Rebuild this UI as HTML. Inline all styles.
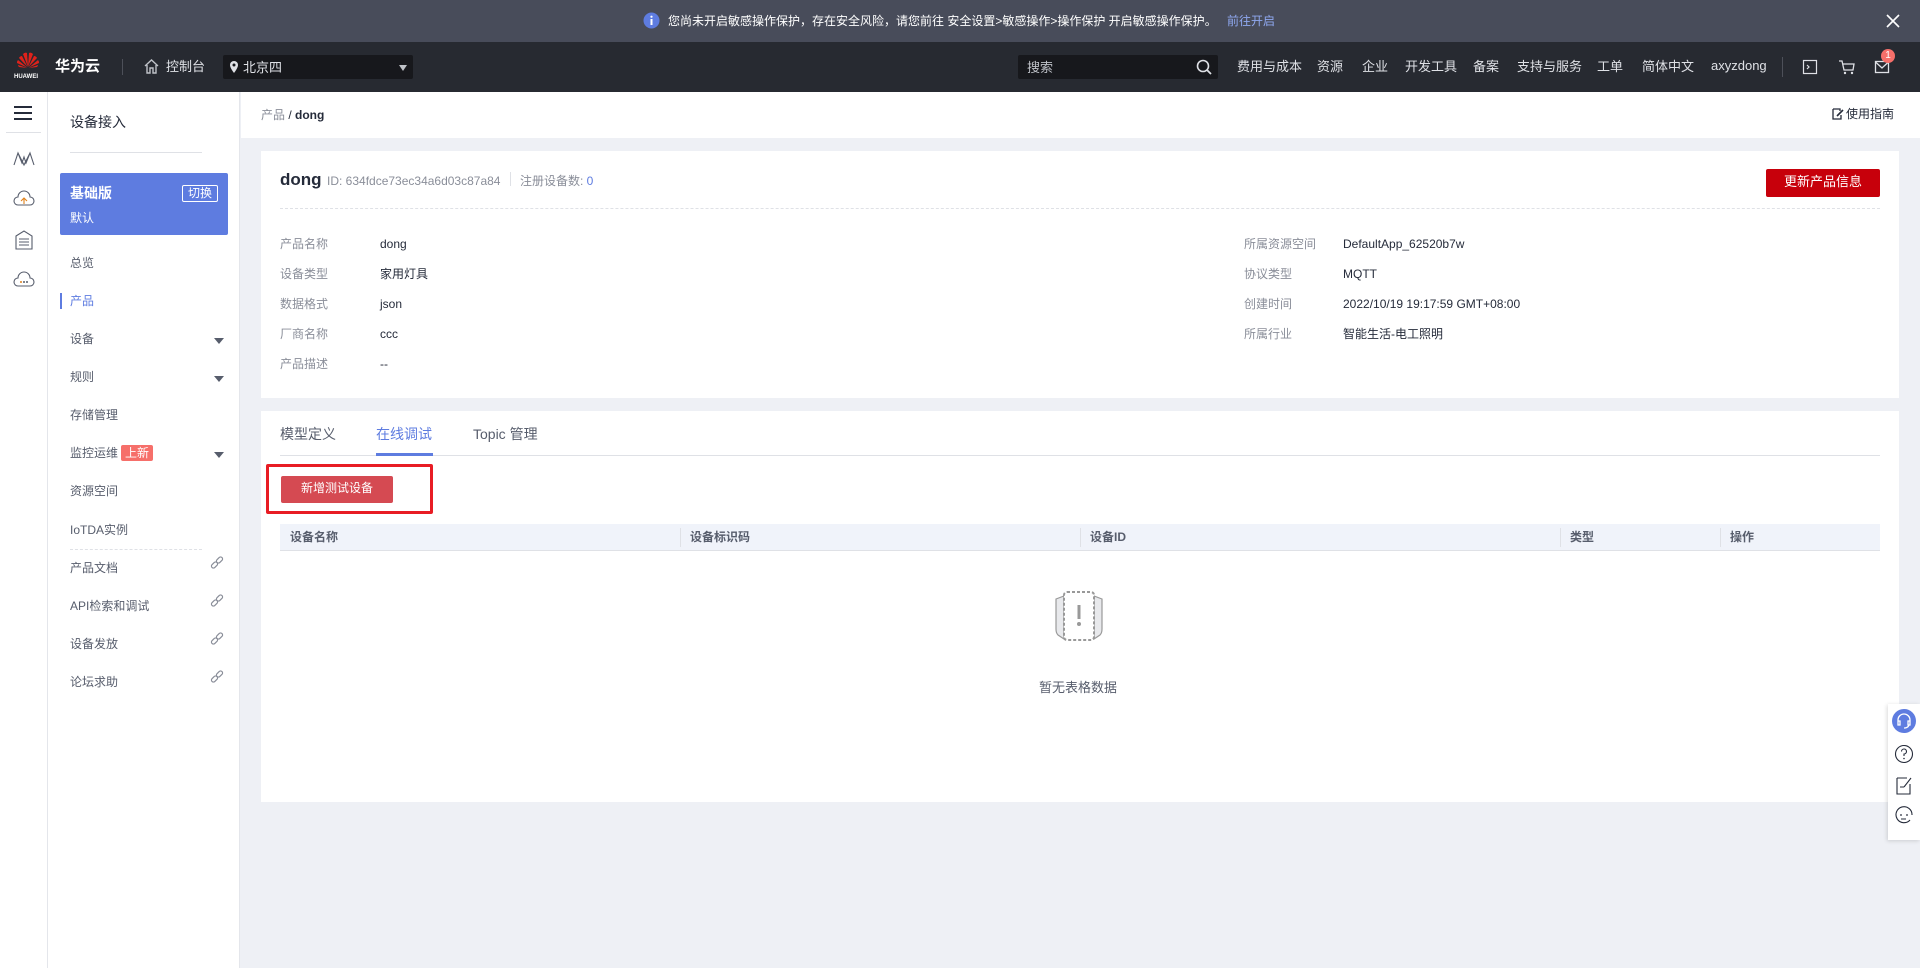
<!DOCTYPE html>
<html><head><meta charset="utf-8">
<style>
*{margin:0;padding:0;box-sizing:border-box}
body{width:1920px;height:968px;overflow:hidden;background:#eef0f5;font-family:"Liberation Sans","Noto Sans CJK SC",sans-serif;font-size:12px;color:#252b3a;position:relative}
.a{position:absolute;white-space:nowrap}
.banner{left:0;top:0;width:1920px;height:42px;background:#484c5a}
.nav{left:0;top:42px;width:1920px;height:50px;background:#272a31}
.navt{color:#dfe1e6;font-size:13px;top:56px}
.rail{left:0;top:92px;width:48px;height:876px;background:#fff;border-right:1px solid #e4e6eb}
.side{left:48px;top:92px;width:192px;height:876px;background:#fff;border-right:1px solid #e4e6eb}
.mi{left:70px;font-size:12px;color:#575d6c}
.arr{left:214px;width:0;height:0;border-left:5px solid transparent;border-right:5px solid transparent;border-top:6px solid #575d6c}
.lbl{color:#8a8e99}
.th{top:524px;height:27px;line-height:27px;font-weight:bold;color:#575d6c;padding-left:10px}
.dv{top:528px;width:1px;height:19px;background:#dfe1e6}
</style></head><body>
<div class="a banner"></div>
<svg class="a" style="left:643px;top:12px" width="17" height="17"><circle cx="8.5" cy="8.5" r="8" fill="#5e7ce0"/><rect x="7.5" y="7" width="2" height="6" fill="#fff"/><circle cx="8.5" cy="4.7" r="1.1" fill="#fff"/></svg>
<div class="a" style="left:668px;top:12px;color:#fff;font-size:12px">您尚未开启敏感操作保护，存在安全风险，请您前往 安全设置&gt;敏感操作&gt;操作保护 开启敏感操作保护。</div>
<div class="a" style="left:1227px;top:12px;color:#8fa8f0;font-size:12px">前往开启</div>
<svg class="a" style="left:1885px;top:13px" width="16" height="16"><path d="M2 2L14 14M14 2L2 14" stroke="#fff" stroke-width="1.6"/></svg>

<div class="a nav"></div>
<svg class="a" style="left:14px;top:51px" width="28" height="22" viewBox="0 0 28 22"><g fill="#e0221b"><path d="M14 16L9 3Q11 1 13 2Z"/><path d="M14 16L19 3Q17 1 15 2Z"/><path d="M13.5 16L5 7Q6 5 8 5Z"/><path d="M14.5 16L23 7Q22 5 20 5Z"/><path d="M13 16.5L3 12Q3 10 4 9Z"/><path d="M15 16.5L25 12Q25 10 24 9Z"/><path d="M13 17L5 16Q4 15 4 14Z"/><path d="M15 17L23 16Q24 15 24 14Z"/></g></svg>
<div class="a" style="left:14px;top:74px;color:#fff;font-size:6px;font-weight:bold">HUAWEI</div>
<div class="a" style="left:55px;top:55px;color:#fff;font-size:15px;font-weight:bold">华为云</div>
<div class="a" style="left:122px;top:59px;width:1px;height:16px;background:#4d5059"></div>
<svg class="a" style="left:143px;top:58px" width="17" height="17"><path d="M2 8L8.5 2L15 8M4 7V15H7V10H10V15H13V7" fill="none" stroke="#bfc2c8" stroke-width="1.4"/></svg>
<div class="a navt" style="left:166px">控制台</div>
<div class="a" style="left:223px;top:55px;width:190px;height:24px;background:#17181c;border-radius:2px"></div>
<svg class="a" style="left:229px;top:60px" width="10" height="14"><path d="M5 13C5 13 1 8 1 5A4 4 0 0 1 9 5C9 8 5 13 5 13Z" fill="#dfe1e6"/><circle cx="5" cy="5" r="1.5" fill="#17181c"/></svg>
<div class="a" style="left:243px;top:57px;color:#dfe1e6;font-size:13px">北京四</div>
<div class="a" style="left:399px;top:65px;border-left:4px solid transparent;border-right:4px solid transparent;border-top:6px solid #bfc2c8"></div>
<div class="a" style="left:1018px;top:55px;width:200px;height:24px;background:#17181c;border-radius:2px"></div>
<div class="a" style="left:1027px;top:57px;color:#bfc2c8;font-size:13px">搜索</div>
<svg class="a" style="left:1196px;top:59px" width="16" height="16"><circle cx="7" cy="7" r="5.5" fill="none" stroke="#dfe1e6" stroke-width="1.6"/><path d="M11 11L15 15" stroke="#dfe1e6" stroke-width="1.8"/></svg>
<div class="a navt" style="left:1237px">费用与成本</div>
<div class="a navt" style="left:1317px">资源</div>
<div class="a navt" style="left:1362px">企业</div>
<div class="a navt" style="left:1405px">开发工具</div>
<div class="a navt" style="left:1473px">备案</div>
<div class="a navt" style="left:1517px">支持与服务</div>
<div class="a navt" style="left:1597px">工单</div>
<div class="a navt" style="left:1642px">简体中文</div>
<div class="a navt" style="left:1711px;top:58px">axyzdong</div>
<div class="a" style="left:1782px;top:57px;width:1px;height:20px;background:#4d5059"></div>
<svg class="a" style="left:1802px;top:59px" width="16" height="16"><rect x="1.5" y="1.5" width="13" height="13" fill="none" stroke="#dfe1e6" stroke-width="1.2"/><path d="M5 6L7 8L5 10" fill="none" stroke="#dfe1e6" stroke-width="1.2"/></svg>
<svg class="a" style="left:1838px;top:59px" width="18" height="16"><path d="M1 2H4L6 11H15L16 5H5" fill="none" stroke="#dfe1e6" stroke-width="1.3"/><circle cx="7" cy="14" r="1.2" fill="#dfe1e6"/><circle cx="14" cy="14" r="1.2" fill="#dfe1e6"/></svg>
<svg class="a" style="left:1874px;top:59px" width="16" height="16"><rect x="1.5" y="2.5" width="13" height="11" fill="none" stroke="#dfe1e6" stroke-width="1.3"/><path d="M1.5 3L8 9L14.5 3" fill="none" stroke="#dfe1e6" stroke-width="1.3"/></svg>
<div class="a" style="left:1881px;top:49px;width:14px;height:14px;border-radius:7px;background:#f66f6a;color:#fff;font-size:10px;text-align:center;line-height:14px">1</div>

<div class="a rail"></div>
<div class="a" style="left:14px;top:106px;width:18px;height:2px;background:#252b3a;box-shadow:0 6px 0 #252b3a,0 12px 0 #252b3a"></div>
<div class="a" style="left:6px;top:132px;width:35px;height:1px;background:#dfe1e6"></div>
<svg class="a" style="left:13px;top:151px" width="22" height="16"><path d="M1 14L5 2L9 12L11 6L13 12L17 2L21 14M5 2L11 14L17 2" fill="none" stroke="#575d6c" stroke-width="1.1"/></svg>
<svg class="a" style="left:13px;top:190px" width="22" height="18"><path d="M5 15H17A4 4 0 0 0 17 7A6 6 0 0 0 5 7A4 4 0 0 0 5 15Z" fill="none" stroke="#575d6c" stroke-width="1.1"/><path d="M11 14V8M8 11L11 8L14 11" fill="none" stroke="#e0821b" stroke-width="1.1"/></svg>
<svg class="a" style="left:14px;top:230px" width="20" height="20"><path d="M2 6L10 1L18 6V19H2Z" fill="none" stroke="#575d6c" stroke-width="1.1"/><path d="M5 9H15M5 12H15M5 15H15" stroke="#575d6c"/></svg>
<svg class="a" style="left:13px;top:271px" width="22" height="16"><path d="M5 15H17A4 4 0 0 0 17 7A6 6 0 0 0 5 7A4 4 0 0 0 5 15Z" fill="none" stroke="#575d6c" stroke-width="1.1"/><circle cx="8" cy="11" r="1" fill="#e0821b"/><circle cx="11" cy="11" r="1" fill="#575d6c"/><circle cx="14" cy="11" r="1" fill="#575d6c"/></svg>

<div class="a side"></div>
<div class="a" style="left:70px;top:112px;font-size:14px;color:#252b3a">设备接入</div>
<div class="a" style="left:70px;top:152px;width:132px;height:1px;background:#dfe1e6"></div>
<div class="a" style="left:60px;top:173px;width:168px;height:62px;background:#5e7ce0;border-radius:2px"></div>
<div class="a" style="left:70px;top:183px;color:#fff;font-size:14px;font-weight:bold">基础版</div>
<div class="a" style="left:182px;top:185px;width:36px;height:17px;border:1px solid #fff;border-radius:2px;color:#fff;font-size:12px;text-align:center;line-height:15px">切换</div>
<div class="a" style="left:70px;top:209px;color:#fff;font-size:12px">默认</div>
<div class="a mi" style="top:254px">总览</div>
<div class="a" style="left:60px;top:293px;width:2px;height:16px;background:#5e7ce0"></div>
<div class="a mi" style="top:292px;color:#5e7ce0">产品</div>
<div class="a mi" style="top:330px">设备</div><div class="a arr" style="top:338px"></div>
<div class="a mi" style="top:368px">规则</div><div class="a arr" style="top:376px"></div>
<div class="a mi" style="top:406px">存储管理</div>
<div class="a mi" style="top:444px">监控运维</div>
<div class="a" style="left:121px;top:445px;width:32px;height:16px;background:#f66f6a;color:#fff;font-size:12px;text-align:center;line-height:16px;border-radius:2px">上新</div>
<div class="a arr" style="top:452px"></div>
<div class="a mi" style="top:482px">资源空间</div>
<div class="a mi" style="top:521px">IoTDA实例</div>
<div class="a" style="left:70px;top:549px;width:132px;border-top:1px dashed #dfe1e6"></div>
<div class="a mi" style="top:559px">产品文档</div>
<div class="a mi" style="top:597px">API检索和调试</div>
<div class="a mi" style="top:635px">设备发放</div>
<div class="a mi" style="top:673px">论坛求助</div>
<svg class="a" style="left:210px;top:556px" width="14" height="14"><g fill="none" stroke="#8a8e99" stroke-width="1.2"><rect x="1" y="7" width="7" height="4" rx="2" transform="rotate(-45 4.5 9)"/><rect x="6" y="2" width="7" height="4" rx="2" transform="rotate(-45 9.5 4)"/></g></svg>
<svg class="a" style="left:210px;top:594px" width="14" height="14"><g fill="none" stroke="#8a8e99" stroke-width="1.2"><rect x="1" y="7" width="7" height="4" rx="2" transform="rotate(-45 4.5 9)"/><rect x="6" y="2" width="7" height="4" rx="2" transform="rotate(-45 9.5 4)"/></g></svg>
<svg class="a" style="left:210px;top:632px" width="14" height="14"><g fill="none" stroke="#8a8e99" stroke-width="1.2"><rect x="1" y="7" width="7" height="4" rx="2" transform="rotate(-45 4.5 9)"/><rect x="6" y="2" width="7" height="4" rx="2" transform="rotate(-45 9.5 4)"/></g></svg>
<svg class="a" style="left:210px;top:670px" width="14" height="14"><g fill="none" stroke="#8a8e99" stroke-width="1.2"><rect x="1" y="7" width="7" height="4" rx="2" transform="rotate(-45 4.5 9)"/><rect x="6" y="2" width="7" height="4" rx="2" transform="rotate(-45 9.5 4)"/></g></svg>

<div class="a" style="left:241px;top:92px;width:1679px;height:46px;background:#fff"></div>
<div class="a" style="left:261px;top:106px;font-size:12px;color:#8a8e99">产品 <span style="color:#252b3a">/ <b>dong</b></span></div>
<svg class="a" style="left:1831px;top:107px" width="13" height="13"><path d="M2 2H9V4M2 2V12H10V8" fill="none" stroke="#252b3a" stroke-width="1.3"/><path d="M6 9L12 3" stroke="#252b3a" stroke-width="1.6"/></svg>
<div class="a" style="left:1846px;top:105px;font-size:12px;color:#252b3a">使用指南</div>

<div class="a" style="left:261px;top:151px;width:1638px;height:247px;background:#fff"></div>
<div class="a" style="left:280px;top:170px;font-size:17px;font-weight:bold;color:#252b3a">dong</div>
<div class="a" style="left:327px;top:174px;font-size:12px;color:#8a8e99">ID: 634fdce73ec34a6d03c87a84</div>
<div class="a" style="left:510px;top:172px;width:1px;height:14px;background:#dfe1e6"></div>
<div class="a" style="left:520px;top:172px;font-size:12px;color:#8a8e99">注册设备数: <span style="color:#5e7ce0">0</span></div>
<div class="a" style="left:1766px;top:169px;width:114px;height:28px;background:#c7000b;border-radius:2px;color:#fff;font-size:13px;text-align:center;line-height:26px">更新产品信息</div>
<div class="a" style="left:280px;top:208px;width:1600px;border-top:1px dashed #dfe1e6"></div>
<div class="a lbl" style="left:280px;top:235px">产品名称</div><div class="a" style="left:380px;top:237px">dong</div>
<div class="a lbl" style="left:280px;top:265px">设备类型</div><div class="a" style="left:380px;top:265px">家用灯具</div>
<div class="a lbl" style="left:280px;top:295px">数据格式</div><div class="a" style="left:380px;top:297px">json</div>
<div class="a lbl" style="left:280px;top:325px">厂商名称</div><div class="a" style="left:380px;top:327px">ccc</div>
<div class="a lbl" style="left:280px;top:355px">产品描述</div><div class="a" style="left:380px;top:357px">--</div>
<div class="a lbl" style="left:1244px;top:235px">所属资源空间</div><div class="a" style="left:1343px;top:237px">DefaultApp_62520b7w</div>
<div class="a lbl" style="left:1244px;top:265px">协议类型</div><div class="a" style="left:1343px;top:267px">MQTT</div>
<div class="a lbl" style="left:1244px;top:295px">创建时间</div><div class="a" style="left:1343px;top:297px">2022/10/19 19:17:59 GMT+08:00</div>
<div class="a lbl" style="left:1244px;top:325px">所属行业</div><div class="a" style="left:1343px;top:325px">智能生活-电工照明</div>

<div class="a" style="left:261px;top:411px;width:1638px;height:391px;background:#fff"></div>
<div class="a" style="left:280px;top:424px;font-size:14px;color:#575d6c">模型定义</div>
<div class="a" style="left:376px;top:424px;font-size:14px;color:#5e7ce0">在线调试</div>
<div class="a" style="left:473px;top:424px;font-size:14px;color:#575d6c">Topic 管理</div>
<div class="a" style="left:280px;top:455px;width:1600px;height:1px;background:#dfe1e6"></div>
<div class="a" style="left:376px;top:453px;width:57px;height:3px;background:#5e7ce0"></div>
<div class="a" style="left:266px;top:464px;width:167px;height:50px;border:3px solid #e81c24;border-radius:2px"></div>
<div class="a" style="left:281px;top:476px;width:112px;height:27px;background:#d54a52;border-radius:2px;color:#fff;font-size:12px;text-align:center;line-height:25px">新增测试设备</div>
<div class="a" style="left:280px;top:524px;width:1600px;height:27px;background:#f0f3fa;border-bottom:1px solid #dfe1e6"></div>
<div class="a th" style="left:280px">设备名称</div>
<div class="a dv" style="left:680px"></div><div class="a th" style="left:680px">设备标识码</div>
<div class="a dv" style="left:1080px"></div><div class="a th" style="left:1080px">设备ID</div>
<div class="a dv" style="left:1560px"></div><div class="a th" style="left:1560px">类型</div>
<div class="a dv" style="left:1720px"></div><div class="a th" style="left:1720px">操作</div>
<svg class="a" style="left:1050px;top:589px" width="58" height="56" viewBox="0 0 58 56"><path d="M6 10L14 7V50L8 46Q6 44 6 40Z M52 10L44 7V50L50 46Q52 44 52 40Z" fill="#e8e9ec" stroke="#999" stroke-width="1.2"/><rect x="14" y="3" width="30" height="48" rx="3" fill="#fff" stroke="#999" stroke-width="2" stroke-dasharray="3 2"/><rect x="27.5" y="16" width="3" height="14" fill="#999"/><circle cx="29" cy="35" r="2" fill="#999"/></svg>
<div class="a" style="left:1039px;top:677px;font-size:13px;color:#575d6c">暂无表格数据</div>

<div class="a" style="left:1888px;top:704px;width:32px;height:136px;background:#fff;box-shadow:-1px 1px 4px rgba(0,0,0,.15)"></div>
<svg class="a" style="left:1892px;top:709px" width="24" height="24"><circle cx="12" cy="12" r="12" fill="#5e7ce0"/><path d="M6 14V11A6 6 0 0 1 18 11V14M6 12H8V16H6ZM16 12H18V16H16ZM17 16Q16 19 12 19" fill="none" stroke="#fff" stroke-width="1.3"/></svg>
<svg class="a" style="left:1894px;top:744px" width="20" height="20"><circle cx="10" cy="10" r="8.5" fill="none" stroke="#252b3a" stroke-width="1.1"/><path d="M7.5 7.5A2.5 2.5 0 1 1 10 10V12" fill="none" stroke="#252b3a" stroke-width="1.1"/><circle cx="10" cy="14.5" r=".8" fill="#252b3a"/></svg>
<svg class="a" style="left:1895px;top:776px" width="18" height="20"><path d="M2 2H12M2 2V18H15V8" fill="none" stroke="#252b3a" stroke-width="1.1"/><path d="M9 11L16 2" stroke="#252b3a" stroke-width="1.1"/><path d="M5 11H9" stroke="#252b3a"/></svg>
<svg class="a" style="left:1894px;top:806px" width="20" height="20"><path d="M16 14A8 8 0 1 1 18 9" fill="none" stroke="#252b3a" stroke-width="1.1"/><circle cx="7" cy="9" r=".9" fill="#252b3a"/><circle cx="13" cy="9" r=".9" fill="#252b3a"/><path d="M7 13H12" stroke="#252b3a"/></svg>
</body></html>
